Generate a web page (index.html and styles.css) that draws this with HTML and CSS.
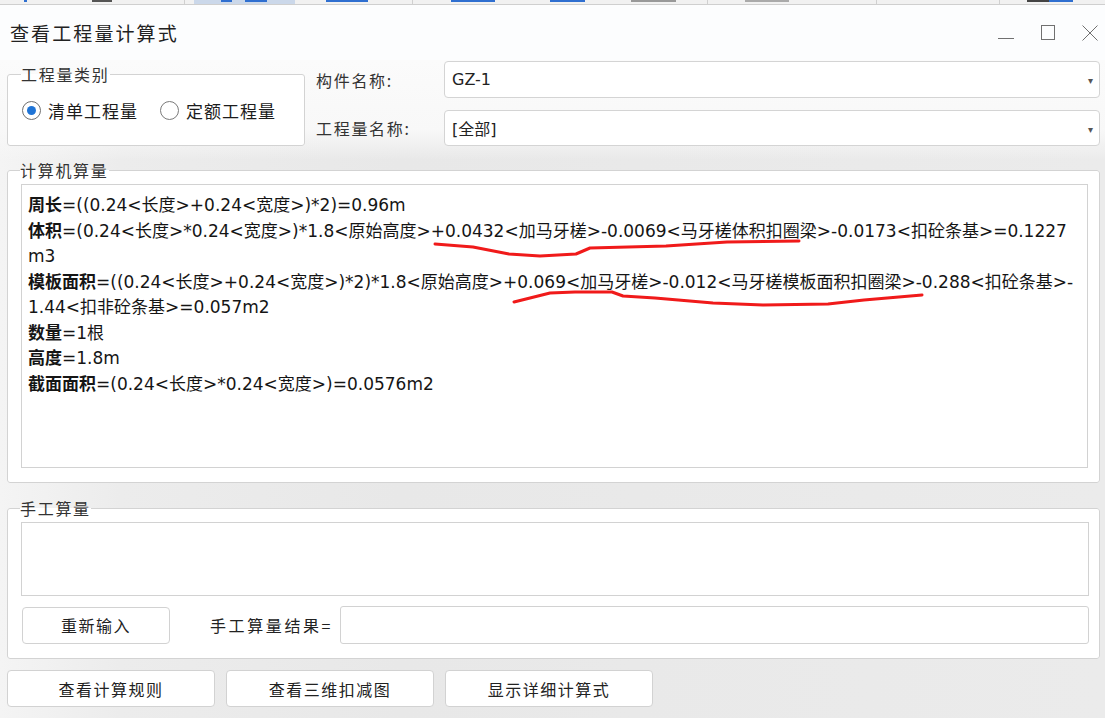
FILE: index.html
```html
<!DOCTYPE html>
<html lang="zh-CN">
<head>
<meta charset="utf-8">
<title>查看工程量计算式</title>
<link rel="stylesheet" href="styles.css">
</head>
<body>
<div class="strip">
  <svg width="1105" height="5" viewBox="0 0 1105 5">
    <rect x="194" y="0" width="101" height="4" fill="#cbd8ea"/>
    <rect x="24" y="0" width="3" height="2" fill="#2f6fd0"/>
    <rect x="92" y="0" width="20" height="2" fill="#555"/>
    <rect x="221" y="0" width="11" height="2" fill="#2f6fd0"/>
    <rect x="245" y="0" width="22" height="2" fill="#2f6fd0"/>
    <rect x="326" y="0" width="42" height="2" fill="#2f6fd0"/>
    <rect x="451" y="0" width="44" height="2" fill="#2f6fd0"/>
    <rect x="550" y="0" width="35" height="2" fill="#2f6fd0"/>
    <rect x="631" y="0" width="45" height="2" fill="#999"/>
    <rect x="745" y="0" width="44" height="2" fill="#aaa"/>
    <rect x="1027" y="0" width="22" height="2" fill="#444"/>
    <rect x="1049" y="0" width="24" height="2" fill="#2f6fd0"/>
    <rect x="184" y="0" width="1" height="4" fill="#d0d0d0"/>
    <rect x="412" y="0" width="1" height="4" fill="#d0d0d0"/>
    <rect x="707" y="0" width="1" height="4" fill="#d0d0d0"/>
    <rect x="876" y="0" width="1" height="4" fill="#d0d0d0"/>
    <rect x="999" y="0" width="1" height="4" fill="#d0d0d0"/>
  </svg>
</div>

<header class="titlebar">
  <div class="title">查看工程量计算式</div>
  <div class="win-controls">
    <svg class="wc" viewBox="0 0 16 16"><line x1="0" y1="13.5" x2="16" y2="13.5"/></svg>
    <svg class="wc" viewBox="0 0 16 16"><rect x="1.5" y="0.5" width="13" height="14"/></svg>
    <svg class="wc" viewBox="0 0 16 16"><line x1="0.5" y1="0.5" x2="15.5" y2="15.5"/><line x1="15.5" y1="0.5" x2="0.5" y2="15.5"/></svg>
  </div>
</header>

<main class="body">
  <section class="top-row">
    <fieldset class="group group-type">
      <legend class="legend">工程量类别</legend>
      <div class="radio-row">
        <label class="radio"><span class="radio-dot checked"></span><span class="radio-text">清单工程量</span></label>
        <label class="radio"><span class="radio-dot"></span><span class="radio-text">定额工程量</span></label>
      </div>
    </fieldset>
    <div class="fields">
      <div class="field-label">构件名称:</div>
      <div class="combo"><span class="combo-value">GZ-1</span><span class="combo-arrow">▾</span></div>
      <div class="field-label">工程量名称:</div>
      <div class="combo"><span class="combo-value">[全部]</span><span class="combo-arrow">▾</span></div>
    </div>
  </section>

  <fieldset class="group group-calc">
    <legend class="legend">计算机算量</legend>
    <div class="calc-box">
      <div class="calc-line"><b>周长</b>=((0.24&lt;长度&gt;+0.24&lt;宽度&gt;)*2)=0.96m</div>
      <div class="calc-line"><b>体积</b>=(0.24&lt;长度&gt;*0.24&lt;宽度&gt;)*1.8&lt;原始高度&gt;+0.0432&lt;加马牙槎&gt;-0.0069&lt;马牙槎体积扣圈梁&gt;-0.0173&lt;扣砼条基&gt;=0.1227<br>m3</div>
      <div class="calc-line"><b>模板面积</b>=((0.24&lt;长度&gt;+0.24&lt;宽度&gt;)*2)*1.8&lt;原始高度&gt;+0.069&lt;加马牙槎&gt;-0.012&lt;马牙槎模板面积扣圈梁&gt;-0.288&lt;扣砼条基&gt;-<br>1.44&lt;扣非砼条基&gt;=0.057m2</div>
      <div class="calc-line"><b>数量</b>=1根</div>
      <div class="calc-line"><b>高度</b>=1.8m</div>
      <div class="calc-line"><b>截面面积</b>=(0.24&lt;长度&gt;*0.24&lt;宽度&gt;)=0.0576m2</div>
    </div>
  </fieldset>

  <fieldset class="group group-manual">
    <legend class="legend">手工算量</legend>
    <div class="manual-area"></div>
    <div class="manual-row">
      <button class="btn btn-reset">重新输入</button>
      <span class="manual-label">手工算量结果=</span>
      <div class="manual-input"></div>
    </div>
  </fieldset>

  <footer class="bottom-buttons">
    <button class="btn btn-wide">查看计算规则</button>
    <button class="btn btn-wide">查看三维扣减图</button>
    <button class="btn btn-wide">显示详细计算式</button>
  </footer>
</main>

<svg class="annotations" width="1105" height="718" viewBox="0 0 1105 718">
  <polyline points="435,244 473,247 509,254 540,256 576,254 590,248 666,246 727,242 799,241"/>
  <polyline points="514,302 530,298 550,293 575,292 612,292 623,296 655,298 713,303 763,305 828,304 864,300 922,295"/>
</svg>
</body>
</html>
```

FILE: styles.css
```css
* {
  box-sizing: border-box;
}

html, body {
  margin: 0;
  padding: 0;
}

body {
  position: relative;
  width: 1105px;
  height: 718px;
  overflow: hidden;
  font-family: "Noto Sans CJK SC", "Microsoft YaHei", sans-serif;
  color: #222;
  background: #e9e9e9;
}

.strip {
  height: 5px;
  background: #f1f1f1;
  border-bottom: 1px solid #cfcfcf;
  overflow: hidden;
}

.strip svg {
  display: block;
}

.titlebar {
  height: 55px;
  background: #fcfdfe;
  display: flex;
  align-items: center;
  justify-content: space-between;
  padding: 0 7px 0 10px;
}

.title {
  font-size: 19px;
  letter-spacing: 2.1px;
  color: #222;
}

.win-controls {
  display: flex;
  gap: 26px;
  align-items: center;
  margin-top: 1px;
}

.wc {
  width: 16px;
  height: 16px;
  fill: none;
  stroke: #707070;
  stroke-width: 1;
}

.body {
  padding: 1px 5px 0 7px;
  background:
    linear-gradient(to bottom, rgba(251,251,251,1) 0px, rgba(248,248,248,1) 70px, rgba(233,233,233,0) 100px),
    linear-gradient(to right, #f4f4f4 0px, #ececec 120px, #e8e8e8 400px, #ebebeb 1105px);
  height: 658px;
}

/* group boxes */
.group {
  margin: 0;
  border: 1px solid #d3d3d3;
  border-radius: 3px;
  background: #fff;
  min-width: 0;
}

.legend {
  font-size: 16px;
  line-height: 20px;
  letter-spacing: 1.7px;
  padding: 0;
  margin-left: -1px;
  color: #333;
}

/* top row */
.top-row {
  display: flex;
  align-items: flex-start;
}

.group-type {
  width: 298px;
  margin-top: 3px;
  padding: 0 10px 9px 14px;
}

.radio-row {
  height: 52px;
  display: flex;
  align-items: center;
  gap: 22px;
}

.radio {
  display: flex;
  align-items: center;
  gap: 7px;
}

.radio-dot {
  width: 19px;
  height: 19px;
  border: 1.5px solid #7a7a7a;
  border-radius: 50%;
  display: flex;
  align-items: center;
  justify-content: center;
  background: #fff;
}

.radio-dot.checked {
  border-color: #6f6f6f;
}

.radio-dot.checked::after {
  content: "";
  width: 9px;
  height: 9px;
  border-radius: 50%;
  background: #1f74d6;
}

.radio-text {
  font-size: 17px;
  letter-spacing: 1px;
  color: #1c1c1c;
}

.fields {
  flex: 1;
  margin-left: 11px;
  display: grid;
  grid-template-columns: 128px 1fr;
  grid-template-rows: 37px 36px;
  row-gap: 12px;
  align-items: center;
}

.field-label {
  font-size: 16px;
  letter-spacing: 1.7px;
  color: #333;
}

.combo {
  height: 100%;
  border: 1px solid #d4d4d4;
  border-radius: 4px;
  background: #fff;
  display: flex;
  align-items: center;
  justify-content: space-between;
  padding: 0 6px 0 7px;
}

.combo-value {
  font-family: "DejaVu Sans", "Noto Sans CJK SC", sans-serif;
  font-size: 16px;
  color: #222;
}

.combo-arrow {
  font-size: 10px;
  color: #555;
}

/* computed group */
.group-calc {
  margin-top: 14px;
  padding: 4px 11px 14px 13px;
}

.calc-box {
  height: 284px;
  border: 1px solid #d2d2d2;
  background: #fff;
  padding: 8px 6px 4px;
  font-family: "DejaVu Sans", "Noto Sans CJK SC", sans-serif;
  font-size: 17px;
  line-height: 25.5px;
  color: #151515;
  white-space: nowrap;
}

.calc-line b {
  font-family: "DejaVu Sans", "Noto Sans CJK SC", sans-serif;
  font-weight: 700;
}

/* manual group */
.group-manual {
  margin-top: 15px;
  padding: 4px 10px 14px 13px;
}

.manual-area {
  height: 74px;
  border: 1px solid #d2d2d2;
  background: #fff;
}

.manual-row {
  margin-top: 10px;
  height: 38px;
  display: flex;
  align-items: center;
}

.btn {
  font-family: inherit;
  font-size: 16px;
  letter-spacing: 1.5px;
  color: #222;
  background: #fff;
  border: 1px solid #d2d2d2;
  border-radius: 4px;
  padding: 0;
  height: 37px;
}

.btn-reset {
  width: 148px;
  margin-left: 1px;
}

.manual-label {
  margin-left: 40px;
  font-size: 16px;
  letter-spacing: 2.6px;
  color: #222;
  width: 130px;
  white-space: nowrap;
}

.manual-input {
  flex: 1;
  height: 38px;
  border: 1px solid #d2d2d2;
  border-radius: 3px;
  background: #fff;
}

/* bottom buttons */
.bottom-buttons {
  margin-top: 11px;
  display: flex;
  gap: 11px;
}

.btn-wide {
  width: 208px;
}

/* hand-drawn red annotation strokes */
.annotations {
  position: absolute;
  left: 0;
  top: 0;
  pointer-events: none;
}

.annotations polyline {
  fill: none;
  stroke: #f01a1a;
  stroke-width: 3;
  stroke-linecap: round;
  stroke-linejoin: round;
}
```
